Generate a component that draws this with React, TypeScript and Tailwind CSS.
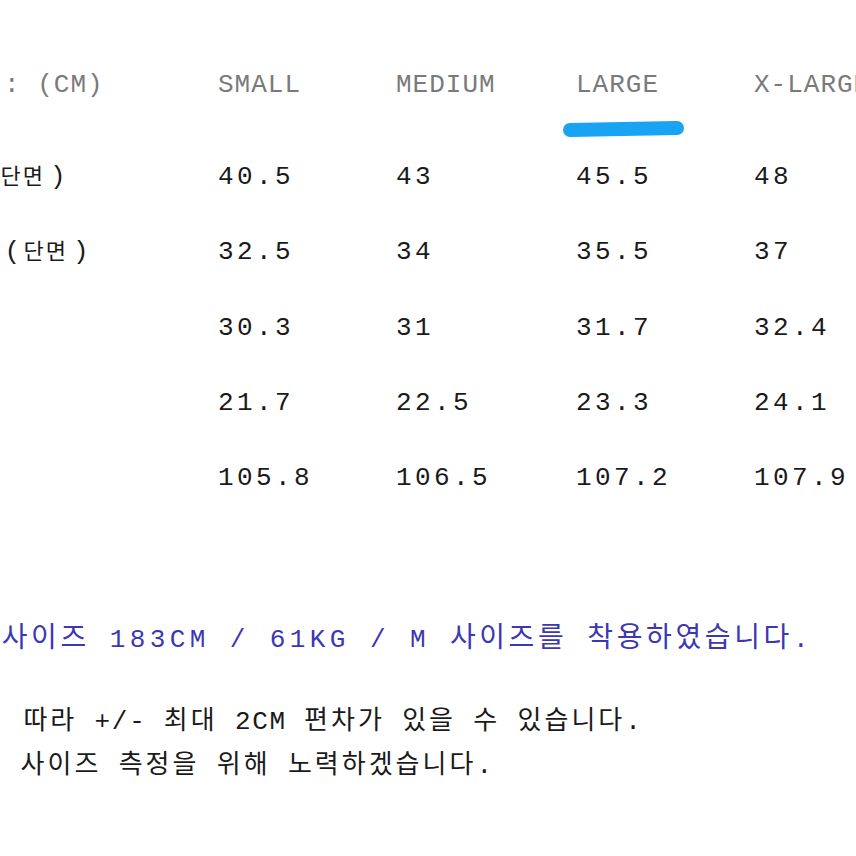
const HANGUL = /([\uAC00-\uD7A3\u3131-\u318E]+)/;

function Mixed({ text, ko }: { text: string; ko: string }) {
  const parts = text.split(HANGUL);
  return (
    <>
      {parts.map((p, i) =>
        HANGUL.test(p) ? (
          <span key={i} className={ko}>
            {p}
          </span>
        ) : (
          <span key={i}>{p}</span>
        )
      )}
    </>
  );
}

const sizes = ["SMALL", "MEDIUM", "LARGE", "X-LARGE"];

const rows: { label: string; shift: string; values: string[] }[] = [
  { label: "가슴(단면)", shift: "-ml-[68px]", values: ["40.5", "43", "45.5", "48"] },
  { label: "허리 (단면)", shift: "-ml-[64px]", values: ["32.5", "34", "35.5", "37"] },
  { label: "어깨", shift: "-ml-[160px]", values: ["30.3", "31", "31.7", "32.4"] },
  { label: "소매", shift: "-ml-[160px]", values: ["21.7", "22.5", "23.3", "24.1"] },
  { label: "총장", shift: "-ml-[160px]", values: ["105.8", "106.5", "107.2", "107.9"] },
];

const koTable = "font-['Noto_Sans_CJK_KR',sans-serif] text-[22px] tracking-[2px] pr-[5px]";
const koNote = "font-['Noto_Sans_CJK_KR',sans-serif] text-[26px] tracking-[3px]";
const koBlue = "font-['Noto_Sans_CJK_KR',sans-serif] text-[28px] tracking-[3.6px]";

export default function App() {
  return (
    <div className="h-[856px] w-[856px] overflow-hidden bg-white font-['Liberation_Mono','Noto_Sans_CJK_KR',monospace] text-[26px] text-[#1a1a1a]">
      <div className="pt-[48px]">
        {/* header */}
        <div className="grid h-[75px] grid-cols-[218px_178px_180px_178px_200px] items-center whitespace-nowrap tracking-[1px] text-[#7a7a7a]">
          <div>
            <span className="-ml-[79px]">SIZE : (CM)</span>
          </div>
          {sizes.map((s) => (
            <div key={s} className="relative">
              {s}
              {s === "LARGE" && (
                <span className="absolute left-[-13px] top-[56px] h-[14px] w-[121px] -rotate-[1deg] rounded-full bg-[#18a4f2]" />
              )}
            </div>
          ))}
        </div>
        <div className="h-[17px]" />
        {rows.map((r) => (
          <div
            key={r.label}
            className="grid h-[75.3px] grid-cols-[218px_178px_180px_178px_200px] items-center whitespace-nowrap tracking-[3.4px]"
          >
            <div>
              <span className={r.shift}>
                <Mixed text={r.label} ko={koTable} />
              </span>
            </div>
            {r.values.map((v, i) => (
              <div key={i}>{v}</div>
            ))}
          </div>
        ))}
      </div>

      <div className="mt-[97px] h-[44px] whitespace-nowrap leading-[44px] tracking-[4.4px] text-[#3c37b3]">
        <span className="-ml-[77px]">
          <Mixed text="모델 사이즈 183CM / 61KG / M 사이즈를 착용하였습니다." ko={koBlue} />
        </span>
      </div>

      <div className="mt-[39px] whitespace-nowrap tracking-[1.7px]">
        <div className="h-[44px] leading-[44px]">
          <span className="-ml-[92px]">
            <Mixed text={"측정에\u00A0\u00A0따라 +/- 최대 2CM 편차가 있을 수 있습니다."} ko={koNote} />
          </span>
        </div>
        <div className="h-[44px] leading-[44px]">
          <span className="-ml-[14px]">
            <Mixed text="· 사이즈 측정을 위해 노력하겠습니다." ko={koNote} />
          </span>
        </div>
      </div>
    </div>
  );
}
